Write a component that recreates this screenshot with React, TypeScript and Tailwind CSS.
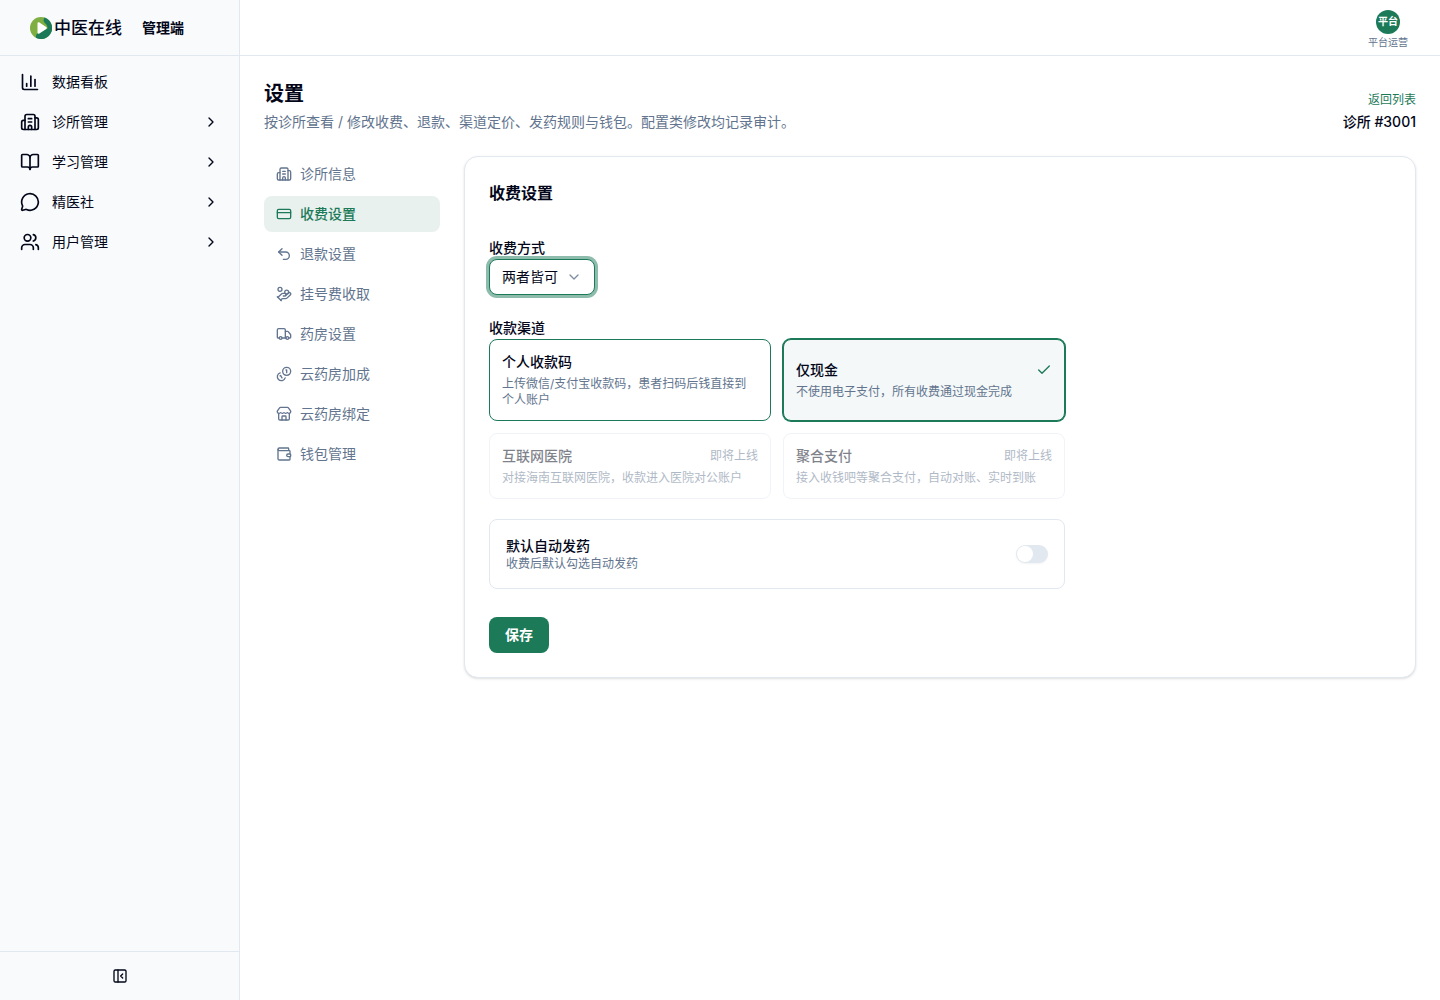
import { useState, type ComponentType, type ReactNode } from "react"
import {
  BookOpen,
  Building2,
  ChartColumn,
  Check,
  ChevronDown,
  ChevronRight,
  CreditCard,
  HandCoins,
  MessageCircle,
  PanelLeftClose,
  Store,
  Truck,
  Undo2,
  Users,
  Wallet,
} from "lucide-react"

type NavItem = {
  label: string
  icon: ComponentType<{ className?: string }>
  expandable?: boolean
}

function CoinsIcon({ className }: { className?: string }) {
  return (
    <svg
      viewBox="0 0 24 24"
      fill="none"
      stroke="currentColor"
      strokeWidth="2"
      strokeLinecap="round"
      strokeLinejoin="round"
      className={className}
      aria-hidden="true"
    >
      <path d="M13.744 17.736a6 6 0 1 1-7.48-7.48" />
      <path d="M15 6h1v4" />
      <path d="m6.134 14.768.866-.5 2 3.464" />
      <circle cx="16" cy="8" r="6" />
    </svg>
  )
}

const mainNav: NavItem[] = [
  { label: "数据看板", icon: ChartColumn },
  { label: "诊所管理", icon: Building2, expandable: true },
  { label: "学习管理", icon: BookOpen, expandable: true },
  { label: "精医社", icon: MessageCircle, expandable: true },
  { label: "用户管理", icon: Users, expandable: true },
]

const settingsNav: NavItem[] = [
  { label: "诊所信息", icon: Building2 },
  { label: "收费设置", icon: CreditCard },
  { label: "退款设置", icon: Undo2 },
  { label: "挂号费收取", icon: HandCoins },
  { label: "药房设置", icon: Truck },
  { label: "云药房加成", icon: CoinsIcon },
  { label: "云药房绑定", icon: Store },
  { label: "钱包管理", icon: Wallet },
]

const channels = [
  {
    id: "personal",
    title: "个人收款码",
    description: "上传微信/支付宝收款码，患者扫码后钱直接到个人账户",
  },
  {
    id: "cash",
    title: "仅现金",
    description: "不使用电子支付，所有收费通过现金完成",
  },
  {
    id: "hospital",
    title: "互联网医院",
    description: "对接海南互联网医院，收款进入医院对公账户",
    comingSoon: true,
  },
  {
    id: "aggregate",
    title: "聚合支付",
    description: "接入收钱吧等聚合支付，自动对账、实时到账",
    comingSoon: true,
  },
]

function Logo() {
  return (
    <svg viewBox="0 0 22 22" className="size-[22px]" aria-hidden="true">
      <circle cx="11" cy="11" r="11" fill="#7fae42" />
      <path
        d="M14.5.6A11 11 0 1 1 6 20.8C5.6 18.4 6.4 16.6 8 16.4L17.5 11.4C17.8 8 15 6.5 14 5C13.2 3.500 13.600 2 14.500.6Z"
        fill="#1c7a59"
      />
      <path
        d="M7.500 6.400C7.500 5.300 8.500 4.900 9.400 5.400L16.200 9.900C17 10.500 17 11.400 16.200 12L9.400 16.400C8.500 17 7.500 16.500 7.500 15.500Z"
        fill="#fff"
      />
    </svg>
  )
}

function Sidebar() {
  return (
    <aside className="flex w-60 shrink-0 flex-col border-r border-slate-200 bg-slate-50">
      <div className="flex h-14 items-center border-b border-slate-200 pl-[30px]">
        <Logo />
        <span className="ml-0.5 text-[17px] leading-7 font-medium">
          中医在线
        </span>
        <span className="ml-5 text-sm font-semibold">管理端</span>
      </div>

      <nav className="flex flex-1 flex-col gap-1 p-2">
        {mainNav.map(({ label, icon: Icon, expandable }) => (
          <button
            key={label}
            type="button"
            className="flex h-9 items-center gap-3 rounded-lg px-3 text-sm hover:bg-slate-100"
          >
            <Icon className="size-5" />
            {label}
            {expandable && <ChevronRight className="ml-auto size-4" />}
          </button>
        ))}
      </nav>

      <div className="flex h-[49px] items-center justify-center border-t border-slate-200">
        <button type="button" aria-label="收起侧栏">
          <PanelLeftClose className="size-4" />
        </button>
      </div>
    </aside>
  )
}

function SettingsNav() {
  const [active, setActive] = useState("收费设置")

  return (
    <nav className="flex w-44 shrink-0 flex-col gap-1">
      {settingsNav.map(({ label, icon: Icon }) => (
        <button
          key={label}
          type="button"
          onClick={() => setActive(label)}
          className={`flex h-9 items-center gap-2 rounded-lg px-3 text-sm ${
            active === label
              ? "bg-[#e8f1ee] font-medium text-[#1c7a59]"
              : "text-slate-500 hover:bg-slate-50"
          }`}
        >
          <Icon className="size-4" />
          {label}
        </button>
      ))}
    </nav>
  )
}

function Field({ children }: { children: ReactNode }) {
  return <div className="text-base">{children}</div>
}

function ChargeSettings() {
  const [channel, setChannel] = useState("cash")

  return (
    <section className="min-w-0 flex-1 rounded-[14px] border border-slate-200 bg-white p-6 shadow-sm">
      <h2 className="text-base font-semibold">收费设置</h2>

      <form className="mt-[30px] max-w-xl" onSubmit={(e) => e.preventDefault()}>
        <div className="flex flex-col gap-5">
          <Field>
            <label htmlFor="charge-mode" className="text-sm font-medium">
              收费方式
            </label>
            <div className="relative w-[106px]">
              <select
                id="charge-mode"
                defaultValue="both"
                className="block h-9 w-full appearance-none rounded-lg border border-[#1c7a59] bg-white pl-3 text-sm ring-3 ring-[#1c7a59]/50 outline-none"
              >
                <option value="both">两者皆可</option>
                <option value="before">先收费</option>
                <option value="after">后收费</option>
              </select>
              <ChevronDown className="pointer-events-none absolute top-2.5 right-[13px] size-4 text-slate-500 opacity-80" />
            </div>
          </Field>

          <Field>
            <span id="channel-label" className="text-sm font-medium">
              收款渠道
            </span>
            <div
              role="radiogroup"
              aria-labelledby="channel-label"
              className="grid grid-cols-2 gap-3"
            >
              {channels.map(({ id, title, description, comingSoon }) => (
                <label
                  key={id}
                  className={`relative flex flex-col justify-center gap-1 rounded-lg border p-3 ${
                    comingSoon
                      ? "border-slate-200 opacity-50"
                      : channel === id
                        ? "border-[#1c7a59] bg-[#f4f8f8] ring-1 ring-[#1c7a59]"
                        : "border-[#1c7a59]"
                  }`}
                >
                  <input
                    type="radio"
                    name="channel"
                    value={id}
                    checked={channel === id}
                    disabled={comingSoon}
                    onChange={() => setChannel(id)}
                    className="sr-only"
                  />
                  <span className="flex items-center justify-between text-sm font-medium">
                    {title}
                    {comingSoon && (
                      <span className="text-xs font-normal text-slate-500">
                        即将上线
                      </span>
                    )}
                    {channel === id && (
                      <Check className="size-4 text-[#1c7a59]" />
                    )}
                  </span>
                  <span className="text-xs text-slate-500">{description}</span>
                </label>
              ))}
            </div>
          </Field>

          <div className="flex items-center justify-between rounded-lg border border-slate-200 p-4">
            <div className="flex flex-col">
              <label htmlFor="auto-dispense" className="text-sm font-medium">
                默认自动发药
              </label>
              <span className="text-xs text-slate-500">
                收费后默认勾选自动发药
              </span>
            </div>
            <input
              id="auto-dispense"
              type="checkbox"
              role="switch"
              className="flex h-[18px] w-8 appearance-none items-center rounded-full bg-slate-200 px-px shadow-xs before:size-4 before:rounded-full before:bg-white before:transition checked:bg-[#1c7a59] checked:before:translate-x-3.5"
            />
          </div>
        </div>

        <button
          type="submit"
          className="mt-7 h-9 rounded-lg bg-[#1c7a59] px-4 text-sm font-semibold text-white"
        >
          保存
        </button>
      </form>
    </section>
  )
}

export default function App() {
  return (
    <div
      lang="zh-CN"
      className="flex min-h-screen bg-white font-['Inter','Noto_Sans_CJK_SC',sans-serif] text-slate-950"
    >
      <Sidebar />

      <div className="flex min-w-0 flex-1 flex-col">
        <header className="flex h-14 items-center justify-end border-b border-slate-200 px-8 pt-1">
          <button type="button" className="flex flex-col items-center">
            <span className="flex size-6 items-center justify-center rounded-full bg-[#1c7a59] text-[10px] font-semibold text-white">
              平台
            </span>
            <span className="text-[10px] leading-4 text-slate-500">
              平台运营
            </span>
          </button>
        </header>

        <main className="flex flex-col gap-6 p-6">
          <div className="flex items-end justify-between">
            <div className="flex flex-col gap-1">
              <h1 className="text-xl font-semibold">设置</h1>
              <p className="text-sm text-slate-500">
                按诊所查看 / 修改收费、退款、渠道定价、发药规则与钱包。配置类修改均记录审计。
              </p>
            </div>
            <div className="flex flex-col items-end gap-1">
              <a href="#clinics" className="text-xs text-[#1c7a59]">
                返回列表
              </a>
              <span className="text-sm font-medium">诊所 #3001</span>
            </div>
          </div>

          <div className="flex items-start gap-6">
            <SettingsNav />
            <ChargeSettings />
          </div>
        </main>
      </div>
    </div>
  )
}
